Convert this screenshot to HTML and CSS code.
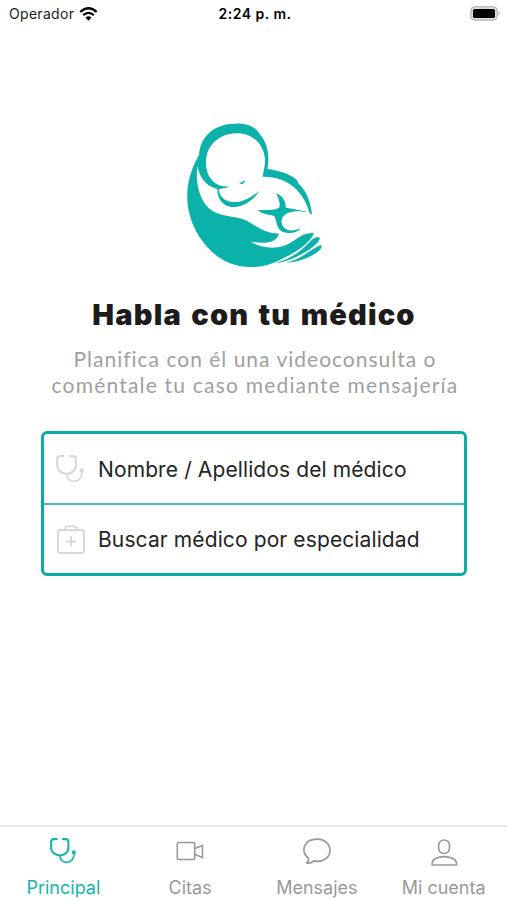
FILE: index.html
```html
<!DOCTYPE html>
<html lang="es">
<head>
<meta charset="utf-8">
<meta name="viewport" content="width=device-width, initial-scale=1">
<title>Habla con tu médico</title>
<link rel="stylesheet" href="styles.css">
</head>
<body>
<svg class="defs" aria-hidden="true">
  <symbol id="stethoscope" viewBox="0 0 28 28">
    <path d="M7.200 1.200H4Q1.200 1.200 1.200 4v6.500q0 4.200 4 6.700Q10.500 20.500 16 17.200q3.800-2.500 3.800-6.700V4q0-2.800-2.800-2.800h-3.200" fill="none" stroke="currentColor" stroke-width="2.200" stroke-linecap="round"/>
    <path d="M10.700 19c0 9.800 15.300 10.200 15.300-2" fill="none" stroke="currentColor" stroke-width="1.700"/>
    <circle cx="25.700" cy="15.500" r="2.200" fill="currentColor"/>
  </symbol>
</svg>
<div class="app">
  <header class="status">
    <div class="carrier"><span>Operador</span>
      <svg class="wifi" viewBox="0 0 18 14"><g fill="none" stroke="#000" stroke-width="2.300"><path d="M.8 5Q9-2.400 17.200 5"/><path d="M3.700 8.200q5.300-4.600 10.600 0"/></g><path d="M6 10.500q3-2.300 6 0l-3 3.200z"/></svg>
    </div>
    <div class="clock">2:24 p. m.</div>
    <svg class="battery" viewBox="0 0 31 15"><rect x=".8" y=".8" width="26.400" height="13.400" rx="3.800" fill="#ddd" stroke="#aaa"/><rect x="3" y="3" width="22" height="9" rx="1.500"/><path d="M28.500 5q3 2.500 0 5z" fill="#bbb"/></svg>
  </header>
  <main>
    <svg class="logo" viewBox="0 0 450 480" fill="#0bb2aa">
      <path fill-rule="evenodd" d="M57 120C62 60 105 27 165 26C205 24 230 39 241 60C263 84 270 125 262 162C295 166 329 176 350 194L356 206C380 227 393 264 396 299L389 295C373 232 325 184 248 185C251 166 256 150 255 132C250 84 216 54 168 55C114 57 78 94 78 142C78 190 107 218 147 214C136 222 126 219 116 224C123 268 181 278 238 227C218 261 184 277 154 276C127 272 112 252 112 222C77 213 58 186 52 153C46 205 58 253 87 280C117 308 160 300 200 317C233 335 249 354 297 356C288 383 259 387 213 380C237 398 278 403 310 393C346 382 362 350 402 354C393 380 358 407 315 427C284 445 253 456 220 456C145 459 93 419 56 362C10 285 10 202 57 120Z"/>
      <path d="M177 204Q188 203 196 194Q194 206 184 207ZM288 234C310 244 318 260 317 278C342 281 368 287 392 293C365 289 342 286 324 294C298 305 299 335 321 344C336 350 348 343 362 341C349 354 326 357 307 350C288 341 291 317 283 304C269 297 251 301 233 286C256 282 282 290 298 277C302 265 295 249 288 234Z"/>
      <path d="M286 445C325 433 353 416 377 393C394 376 404 362 420 368C418 385 383 409 350 425C326 436 307 442 286 445ZM319 443C366 433 393 400 424 390C430 405 396 423 370 433C350 440 335 443 319 443Z"/>
    </svg>
    <h1>Habla con tu médico</h1>
    <p class="intro"><span class="first">Planifica con él una videoconsulta o</span><br><span class="second">coméntale tu caso mediante mensajería</span></p>
    <div class="search">
      <div class="field"><svg class="field-icon"><use href="#stethoscope"/></svg><span>Nombre / Apellidos del médico</span></div>
      <div class="field"><svg class="field-icon case" viewBox="0 0 28 29" fill="none" stroke="currentColor" stroke-width="1.900"><rect x="1" y="5" width="26" height="23" rx="2"/><path d="M8 5q0-3.600 3-3.600h6q3 0 3 3.600M9 16.500h10M14 11.500v10"/></svg><span>Buscar médico por especialidad</span></div>
    </div>
  </main>
  <nav>
    <a class="active"><svg class="st" viewBox="0 0 28 28"><use href="#stethoscope"/></svg><span>Principal</span></a>
    <a><svg viewBox="0 0 30 30"><g fill="none" stroke="currentColor" stroke-width="1.600"><rect x="2.300" y="6.500" width="17.400" height="17" rx="1.500"/><path d="M20 12.500l7.500-3v12l-7.500-3"/></g></svg><span>Citas</span></a>
    <a><svg viewBox="0 0 30 30"><path d="M6.500 22.500C-2 15 2 3.200 15 3.200c7.500 0 13 4.700 13 11 0 8-8 12.500-16 10.600-2.500 2.200-5 2.700-7.500 2.200 1.500-1.300 2.300-2.500 2-4.500z" fill="none" stroke="currentColor" stroke-width="1.700" stroke-linejoin="round"/></svg><span>Mensajes</span></a>
    <a><svg viewBox="0 0 30 30"><g fill="none" stroke="currentColor" stroke-width="1.700"><rect x="9.700" y="4" width="10.800" height="13.500" rx="5.200"/><path d="M3.200 29v-2C4 18.500 26.500 18.500 27.500 27v2z" stroke-linejoin="round"/></g></svg><span>Mi cuenta</span></a>
  </nav>
</div>
</body>
</html>
```
FILE: styles.css
```css
* { box-sizing: border-box; }
body { margin: 0; background: #fff; font-family: Inter, sans-serif; color: #242424; }
svg { display: block; flex: none; }
.defs { position: absolute; width: 0; height: 0; }
.app { width: 507px; height: 900px; display: flex; flex-direction: column; overflow: hidden; white-space: nowrap; }
.status { height: 27px; padding: 0 6px 0 9px; display: grid; grid-template-columns: 1fr auto 1fr; align-items: center; font-size: 14px; color: #222; }
.carrier { display: flex; align-items: center; gap: 5px; letter-spacing: .3px; }
.wifi { width: 19px; height: 14px; }
.clock { font-weight: 600; color: #000; letter-spacing: .5px; }
.battery { width: 31px; height: 15px; justify-self: end; }
main { flex: 1; display: flex; flex-direction: column; align-items: center; padding-left: 1px; }
.logo { width: 150px; height: 160px; margin: 88px 0 0 2px; }
h1 { margin: 20px 0 0; font: 900 29px/40px Inter, sans-serif; letter-spacing: 1.200px; word-spacing: 2.300px; color: #1d1b1c; }
.intro { margin: 11px 0 0 2px; font: 400 21px/26px Lato, sans-serif; color: #a0a0a0; text-align: center; }
.first { letter-spacing: 1px; }
.second { letter-spacing: 1.200px; }
.search { width: 426px; height: 145px; margin-top: 33px; border: 3px solid #0caca3; border-radius: 6px; display: grid; grid-template-rows: 69px 70px; }
.field { display: flex; align-items: center; padding: 1px 0 0 12px; gap: 14px; font-size: 21px; letter-spacing: .110px; }
.field + .field { border-top: 2px solid #4bbbb2; padding: 0 0 0 13px; gap: 13px; }
.field-icon { width: 28px; height: 28px; color: #d8d8d8; }
.case { height: 29px; }
nav { height: 75px; border-top: 2px solid #e5e5e5; display: grid; grid-template-columns: repeat(4, 1fr); color: #999; }
nav a { display: flex; flex-direction: column; align-items: center; padding-top: 9px; font-size: 18px; line-height: 24px; gap: 10px; }
nav svg { width: 30px; height: 30px; }
nav .st { width: 26px; height: 26px; margin: 2px 0; }
.active { color: #16b5ab; }
```
